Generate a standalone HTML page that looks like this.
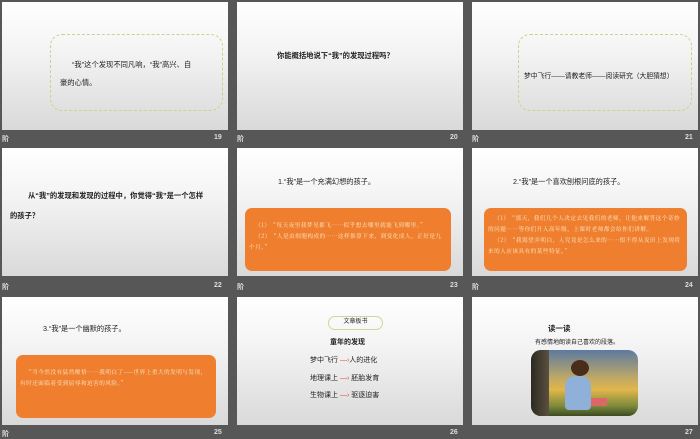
<!DOCTYPE html>
<html><head><meta charset="utf-8"><style>
*{margin:0;padding:0;box-sizing:border-box}
body{width:700px;height:438px;background:#575757;position:relative;overflow:hidden;font-family:"Liberation Sans","Noto Sans CJK SC",sans-serif;color:#222}
.s{position:absolute;width:226px;height:128px;background:linear-gradient(#fff,#f3f3f3 40%,#d9d9d9);overflow:hidden}
.a{position:absolute;white-space:nowrap}
.f{position:absolute;font-size:7px;color:#ddd;font-weight:bold}
.dash{position:absolute;border:1.5px dashed #c9d48a;border-radius:12px}
.or{position:absolute;background:#ef7f2f;border-radius:7px;color:#fbe9c8;font-size:5.6px;line-height:11px;padding:8px 4px 0 4px;letter-spacing:0.5px;font-family:"Noto Serif CJK SC",serif}
</style></head><body>
<!-- row 1 -->
<div class="s" style="left:2px;top:2px">
<div class="dash" style="left:48px;top:32px;width:173px;height:77px"></div>
<div class="a" style="left:70px;top:58px;font-size:7.3px">“我”这个发现不同凡响，“我”高兴、自</div>
<div class="a" style="left:58px;top:76px;font-size:7.3px">豪的心情。</div>
</div>
<div class="s" style="left:237px;top:2px">
<div class="a" style="left:40px;top:49px;font-size:7.3px;font-weight:bold">你能概括地说下“我”的发现过程吗？</div>
</div>
<div class="s" style="left:472px;top:2px">
<div class="dash" style="left:46px;top:32px;width:174px;height:77px"></div>
<div class="a" style="left:52px;top:68px;font-size:6.8px">梦中飞行——请教老师——阅读研究（大胆猜想）</div>
</div>
<!-- row 2 -->
<div class="s" style="left:2px;top:148px">
<div class="a" style="left:26px;top:43px;font-size:7.3px;font-weight:bold">从“我”的发现和发现的过程中，你觉得“我”是一个怎样</div>
<div class="a" style="left:8px;top:63px;font-size:7.3px;font-weight:bold">的孩子？</div>
</div>
<div class="s" style="left:237px;top:148px">
<div class="a" style="left:41px;top:29px;font-size:7.2px">1.“我”是一个充满幻想的孩子。</div>
<div class="or" style="left:8px;top:60px;width:206px;height:63px;white-space:normal;padding-top:12px">&emsp;（1）“每天夜里我梦见都飞……似乎想去哪里就能飞到哪里。”<br>&emsp;（2）“人是由细胞构成的……这样推算下来，到变化成人，正好是九个月。”</div>
</div>
<div class="s" style="left:472px;top:148px">
<div class="a" style="left:41px;top:29px;font-size:7.2px">2.“我”是一个喜欢刨根问底的孩子。</div>
<div class="or" style="left:12px;top:60px;width:203px;height:63px;white-space:normal;padding-top:5px">&emsp;（1）“那天，我们几个人决定去见我们的老师，让他来解答这个奇妙的问题……等你们升入高年级，上课时老师都会给你们讲解。<br>&emsp;（2）“我渴望弄明白，人究竟是怎么来的……恨不得从麦田上发现将来的人应该具有的某些特征。”</div>
</div>
<!-- row 3 -->
<div class="s" style="left:2px;top:297px">
<div class="a" style="left:41px;top:27px;font-size:7.2px">3.“我”是一个幽默的孩子。</div>
<div class="or" style="left:14px;top:58px;width:200px;height:63px;white-space:normal;padding-top:12px">&emsp;“当今然没有猛然醒悟……我明白了——世界上重大的发明与发现，有时还面临着受到屈辱和迫害的风险。”</div>
</div>
<div class="s" style="left:237px;top:297px">
<div style="position:absolute;left:91px;top:19px;width:55px;height:14px;border:1.5px solid #c8d99a;border-radius:8px;font-size:6px;text-align:center;line-height:11px">文章板书</div>
<div class="a" style="left:93px;top:40px;font-size:7px;font-weight:bold">童年的发现</div>
<div class="a" style="left:73px;top:58px;font-size:7px">梦中飞行 <span style="color:#e0452c">—›</span>人的进化</div>
<div class="a" style="left:73px;top:76px;font-size:7px">地理课上 <span style="color:#e0452c">—›</span> 胚胎发育</div>
<div class="a" style="left:73px;top:93px;font-size:7px">生物课上 <span style="color:#e0452c">—›</span> 驱逐迫害</div>
</div>
<div class="s" style="left:472px;top:297px">
<div class="a" style="left:76px;top:26px;font-size:7.5px;font-weight:bold">读一读</div>
<div class="a" style="left:63px;top:40px;font-size:6px">有感情地朗读自己喜欢的段落。</div>
<div style="position:absolute;left:59px;top:53px;width:107px;height:66px;border-radius:10px;overflow:hidden;background:linear-gradient(180deg,#5d7aa0 0%,#b9a66a 40%,#e2b64a 60%,#7c8a3c 85%,#3d4a22 100%)">
<div style="position:absolute;left:0;top:0;width:18px;height:66px;background:linear-gradient(90deg,#2e2a22,#5a5040)"></div>
<div style="position:absolute;left:40px;top:10px;width:18px;height:16px;border-radius:50%;background:#4a2c1a"></div>
<div style="position:absolute;left:34px;top:26px;width:26px;height:34px;border-radius:10px 10px 4px 4px;background:#8fb0d8"></div>
<div style="position:absolute;left:60px;top:48px;width:16px;height:8px;background:#d66"></div>
</div>
</div>
<!-- footers -->
<div class="f" style="left:2px;top:134px">阶</div><div class="f" style="left:214px;top:134px">19</div>
<div class="f" style="left:237px;top:134px">阶</div><div class="f" style="left:450px;top:134px">20</div>
<div class="f" style="left:472px;top:134px">阶</div><div class="f" style="left:685px;top:134px">21</div>
<div class="f" style="left:2px;top:282px">阶</div><div class="f" style="left:214px;top:282px">22</div>
<div class="f" style="left:237px;top:282px">阶</div><div class="f" style="left:450px;top:282px">23</div>
<div class="f" style="left:472px;top:282px">阶</div><div class="f" style="left:685px;top:282px">24</div>
<div class="f" style="left:2px;top:429px">阶</div><div class="f" style="left:214px;top:429px">25</div>
<div class="f" style="left:450px;top:429px">26</div>
<div class="f" style="left:685px;top:429px">27</div>
</body></html>
